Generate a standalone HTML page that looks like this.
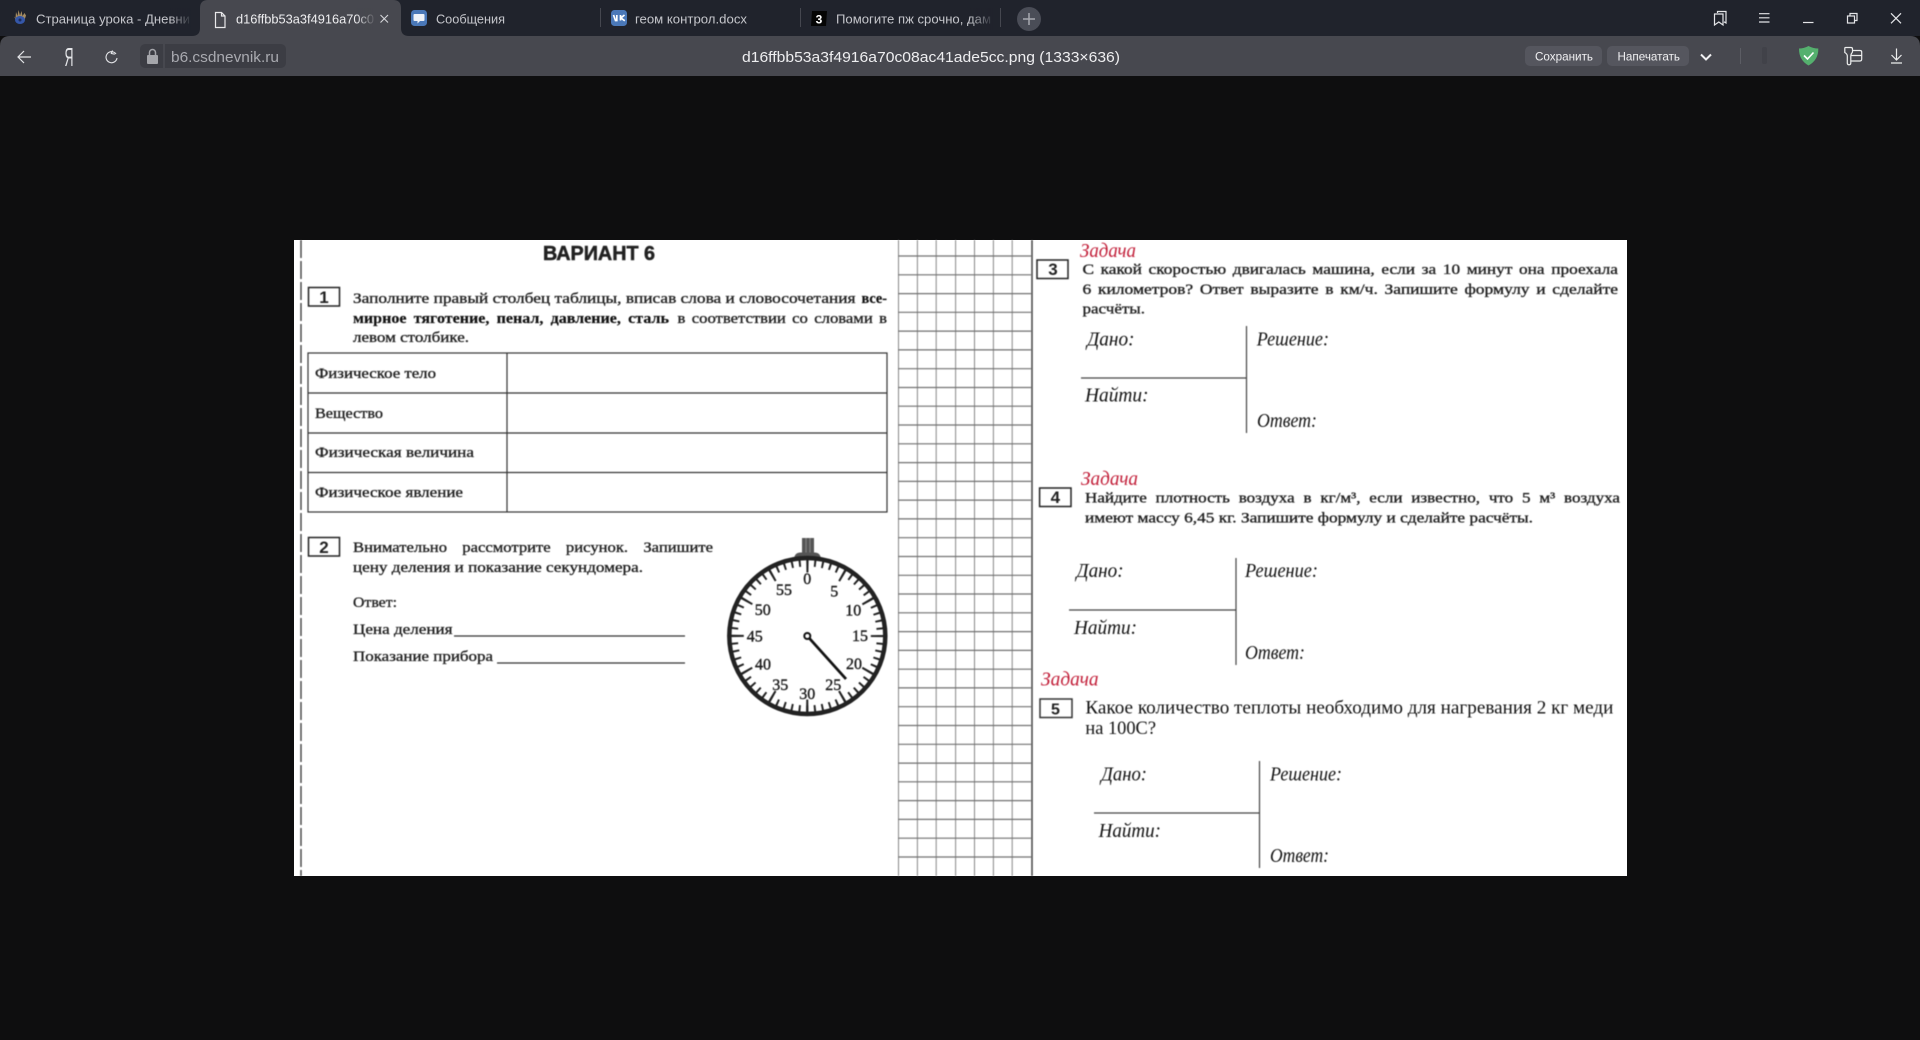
<!DOCTYPE html>
<html lang="ru"><head><meta charset="utf-8"><title>d16ffbb53a3f4916a70c08ac41ade5cc.png (1333×636)</title>
<style>
html,body{margin:0;padding:0;background:#0e0e0f;width:1920px;height:1040px;overflow:hidden}
svg{display:block}
.ui{font-family:"Liberation Sans",sans-serif;filter:blur(.25px)}
.doc{filter:blur(.4px)}
.b{font-family:"Liberation Serif",serif;font-size:15px;fill:#222;stroke:#222;stroke-width:.35}
.bb{font-family:"Liberation Serif",serif;font-size:15px;font-weight:bold;fill:#111;stroke:#111;stroke-width:.2}
.i{font-family:"Liberation Serif",serif;font-style:italic;font-size:20px;fill:#111}
.z{font-family:"Liberation Serif",serif;font-style:italic;font-size:20px;fill:#c2203a}
.n{font-family:"Liberation Sans",sans-serif;font-weight:bold;font-size:17px;fill:#222;text-anchor:middle}
.w{font-family:"Liberation Serif",serif;font-size:16px;fill:#1c1c1c;stroke:#1c1c1c;stroke-width:.4;text-anchor:middle}
.t{font-size:13px;fill:#c5c6cb}
</style></head><body>
<svg width="1920" height="1040" viewBox="0 0 1920 1040" xmlns="http://www.w3.org/2000/svg">
<defs>
<linearGradient id="f1"><stop offset="0" stop-color="#20232c" stop-opacity="0"/><stop offset="1" stop-color="#20232c"/></linearGradient>
<linearGradient id="f2"><stop offset="0" stop-color="#47484f" stop-opacity="0"/><stop offset="1" stop-color="#47484f"/></linearGradient>
</defs>
<rect width="1920" height="1040" fill="#0e0e0f"/>
<!-- tab strip -->
<rect width="1920" height="36" fill="#20232c"/>
<path d="M0 76V46Q0 36 10 36H1910Q1920 36 1920 46V76Z" fill="#47484f"/>
<path d="M192 36Q200 36 200 28V8Q200 0 208 0H393Q401 0 401 8V28Q401 36 409 36Z" fill="#47484f"/>
<g class="ui">
<!-- tab 1 -->
<path d="M14 16.500L15.500 18L16 12L17.500 16L18.500 10L20 15.500L21.500 11L22.500 16L24.500 13L26 15.500L24.500 20L22 20H16Z" fill="#a58c62"/>
<ellipse cx="20" cy="20" rx="5" ry="4" fill="#3557a8"/>
<circle cx="20" cy="20" r="1.500" fill="#1d2c5c"/>
<text class="t" x="36" y="23.500" textLength="154" lengthAdjust="spacingAndGlyphs">Страница урока - Дневни</text>
<rect x="170" y="8" width="22" height="22" fill="url(#f1)"/>
<!-- tab 2 -->
<path d="M215.500 12.500H221.500L225 16V27.500H215.500Z M221.500 12.500V16H225" fill="none" stroke="#e8e8ea" stroke-width="1.200"/>
<text x="236" y="23.500" font-size="13" fill="#eeeef0" textLength="138" lengthAdjust="spacingAndGlyphs">d16ffbb53a3f4916a70c0</text>
<rect x="356" y="8" width="20" height="22" fill="url(#f2)"/>
<path d="M380.500 15L388 22.500M388 15L380.500 22.500" stroke="#d5d6da" stroke-width="1.100"/>
<!-- tab 3 -->
<rect x="411" y="10" width="16" height="16" rx="3.500" fill="#4a78b8"/>
<path d="M414.500 14H423.500Q424.500 14 424.500 15V20Q424.500 21 423.500 21H420L417.500 23.500V21H414.500Q413.500 21 413.500 20V15Q413.500 14 414.500 14Z" fill="#eef2f8"/>
<text class="t" x="436" y="23.500" textLength="69" lengthAdjust="spacingAndGlyphs">Сообщения</text>
<rect x="600" y="8" width="1" height="19" fill="#45474f"/>
<!-- tab 4 -->
<rect x="611" y="10" width="16" height="16" rx="3.500" fill="#4a78b8"/>
<path d="M613.500 15L615.500 20.500H616.800V15M620.500 15V20.500M624.500 15L620.800 18L624.800 20.800" fill="none" stroke="#fff" stroke-width="1.700"/>
<text class="t" x="635" y="23.500" textLength="112" lengthAdjust="spacingAndGlyphs">геом контрол.docx</text>
<rect x="800" y="8" width="1" height="19" fill="#45474f"/>
<!-- tab 5 -->
<path d="M812 11H827L826 26H811Z" fill="#050505"/>
<text x="819" y="23.500" font-size="12" font-weight="bold" fill="#fff" text-anchor="middle">3</text>
<text class="t" x="836" y="23.500" textLength="155" lengthAdjust="spacingAndGlyphs">Помогите пж срочно, дам</text>
<rect x="970" y="8" width="24" height="22" fill="url(#f1)"/>
<rect x="1000" y="8" width="1" height="19" fill="#45474f"/>
<circle cx="1029" cy="19" r="12" fill="#4a4d57"/>
<path d="M1023 19H1035M1029 13V25" stroke="#a7a9b0" stroke-width="1.500"/>
<!-- window controls -->
<g fill="none" stroke="#e4e5e8" stroke-width="1.200">
<path d="M1717.500 13V11.500H1726V23L1724 21.800"/>
<path d="M1714.500 14H1723V25L1718.800 22L1714.500 25Z"/>
<path d="M1759 13.700H1769.500M1759 17.800H1769.500M1759 22H1769.500"/>
<path d="M1803 22.500H1813.500"/>
<rect x="1847.500" y="16" width="7" height="7"/>
<path d="M1850 16V13.500H1857V20.500H1854.500"/>
<path d="M1891 13.300L1901 23.300M1901 13.300L1891 23.300"/>
</g>
<!-- toolbar -->
<path d="M31 57H18M24 51L18 57L24 63" fill="none" stroke="#e4e5e8" stroke-width="1.200"/>
<text x="69" y="66" font-size="26" fill="#e4e5e8" text-anchor="middle" textLength="9" lengthAdjust="spacingAndGlyphs" font-weight="normal">Я</text>
<path d="M116 54A5.500 5.500 0 1 0 117 58M112.500 50.500L111.300 53.500L114.800 54.200" fill="none" stroke="#e4e5e8" stroke-width="1.100"/>
<path d="M140 50Q140 44 146 44H163V68H146Q140 68 140 62Z" fill="#3c3d44"/>
<path d="M165 44H280Q286 44 286 50V62Q286 68 280 68H165Z" fill="#3c3d44"/>
<rect x="147" y="55" width="11" height="9" rx="1" fill="#a5a6ab"/>
<path d="M149.500 55V52.500A3 3 0 0 1 155.500 52.500V55" fill="none" stroke="#a5a6ab" stroke-width="1.500"/>
<text x="171" y="62" font-size="15" fill="#a9aab0" textLength="108" lengthAdjust="spacingAndGlyphs">b6.csdnevnik.ru</text>
<text x="742" y="62" font-size="15" fill="#eeeef0" textLength="378" lengthAdjust="spacingAndGlyphs">d16ffbb53a3f4916a70c08ac41ade5cc.png (1333×636)</text>
<rect x="1525" y="46" width="77" height="20" rx="5" fill="#55565e"/>
<text x="1535" y="60.500" font-size="12" fill="#f0f0f2" textLength="58" lengthAdjust="spacingAndGlyphs">Сохранить</text>
<rect x="1607" y="46" width="82" height="20" rx="5" fill="#55565e"/>
<text x="1617.500" y="60.500" font-size="12" fill="#f0f0f2" textLength="62.500" lengthAdjust="spacingAndGlyphs">Напечатать</text>
<path d="M1701 54.500L1706 59.500L1711 54.500" fill="none" stroke="#f0f0f2" stroke-width="2"/>
<rect x="1740" y="48" width="1" height="16" fill="#5c5d64"/>
<rect x="1762" y="47" width="5" height="17" rx="2" fill="#414249"/>
<path d="M1808.500 46Q1813 48.500 1818.300 48.500Q1818.500 60 1808.500 65.500Q1798.800 60 1799 48.500Q1804 48.500 1808.500 46Z" fill="#55b06e"/>
<path d="M1804 55.500L1807.500 59L1813.500 52.500" fill="none" stroke="#fff" stroke-width="1.600"/>
<g fill="none" stroke="#eceded" stroke-width="1.200">
<path d="M1845.500 47.500H1851Q1852.500 47.500 1852.500 49V52Q1850.800 54 1850.800 56V63Q1850.800 64.800 1849 64.800Q1847.300 64.800 1847.300 63V56Q1847.300 54 1844.800 52.500V48.500Q1844.800 47.500 1845.500 47.500Z"/>
<path d="M1852.500 50.500H1860Q1861.700 50.500 1861.700 52V59Q1861.700 61 1860 61H1851M1851.500 55.500H1861.700"/>
<path d="M1896.500 48.500V60M1891.500 55L1896.500 60L1901.500 55M1891 63H1902"/>
</g>
</g>
<!-- image -->
<rect x="294" y="240" width="1333" height="636" fill="#fff"/>
<g class="doc">
<path d="M301 240V876" stroke="#333" stroke-width="1.300" stroke-dasharray="18 3"/>
<text x="543" y="260" font-family="Liberation Sans, sans-serif" font-weight="bold" font-size="20" fill="#222" stroke="#222" stroke-width=".5" textLength="112" lengthAdjust="spacingAndGlyphs">ВАРИАНТ 6</text>
<!-- task 1 -->
<rect x="308.500" y="287.500" width="31" height="18.500" fill="none" stroke="#222" stroke-width="1.500"/>
<text class="n" x="324" y="303">1</text>
<text class="b" x="353" y="303" textLength="502.500" lengthAdjust="spacingAndGlyphs">Заполните правый столбец таблицы, вписав слова и словосочетания</text>
<text class="bb" x="861.500" y="303" textLength="25.500" lengthAdjust="spacingAndGlyphs">все-</text>
<text class="bb" x="353" y="323" textLength="316" lengthAdjust="spacingAndGlyphs" word-spacing="3">мирное тяготение, пенал, давление, сталь</text>
<text class="b" x="677.500" y="323" textLength="209.500" lengthAdjust="spacingAndGlyphs" word-spacing="2">в соответствии со словами в</text>
<text class="b" x="353" y="342" textLength="116" lengthAdjust="spacingAndGlyphs">левом столбике.</text>
<g fill="none" stroke="#333" stroke-width="1.200">
<rect x="308" y="353" width="579" height="159"/>
<path d="M507 353V512M308 393H887M308 433H887M308 472.500H887"/>
</g>
<text class="b" x="315" y="378" textLength="121" lengthAdjust="spacingAndGlyphs">Физическое тело</text>
<text class="b" x="315" y="418" textLength="68" lengthAdjust="spacingAndGlyphs">Вещество</text>
<text class="b" x="315" y="457" textLength="159" lengthAdjust="spacingAndGlyphs">Физическая величина</text>
<text class="b" x="315" y="497" textLength="148" lengthAdjust="spacingAndGlyphs">Физическое явление</text>
<!-- task 2 -->
<rect x="308.500" y="537.500" width="31" height="18.500" fill="none" stroke="#222" stroke-width="1.500"/>
<text class="n" x="324" y="553">2</text>
<text class="b" x="353" y="552" textLength="360" lengthAdjust="spacingAndGlyphs" word-spacing="10">Внимательно рассмотрите рисунок. Запишите</text>
<text class="b" x="353" y="572" textLength="290" lengthAdjust="spacingAndGlyphs">цену деления и показание секундомера.</text>
<text class="b" x="353" y="607" textLength="44" lengthAdjust="spacingAndGlyphs">Ответ:</text>
<text class="b" x="353" y="634" textLength="99.500" lengthAdjust="spacingAndGlyphs">Цена деления</text>
<path d="M454 636H685M497 663H685" stroke="#333" stroke-width="1.200"/>
<text class="b" x="353" y="661" textLength="140" lengthAdjust="spacingAndGlyphs">Показание прибора</text>
<!-- stopwatch -->
<rect x="802" y="538" width="12" height="16" fill="#555"/>
<path d="M806 538V554M810 538V554" stroke="#888" stroke-width="1"/>
<path d="M794 560Q794 553 800 552.500H815Q821 553 821 560Z" fill="#555"/>
<circle cx="807.300" cy="636" r="78" fill="#fff" stroke="#222" stroke-width="4.500"/>
<circle cx="807.300" cy="636" r="73" fill="none" stroke="#222" stroke-width="7" stroke-dasharray="2 5.645" stroke-dashoffset="1"/>
<circle cx="807.300" cy="636" r="70" fill="none" stroke="#222" stroke-width="13" stroke-dasharray="2.200 34.452" stroke-dashoffset="1.100"/>
<text class="w" x="807.300" y="584">0</text><text class="w" x="834.300" y="596.500">5</text><text class="w" x="853.300" y="615.500">10</text><text class="w" x="860" y="641">15</text><text class="w" x="854" y="669">20</text><text class="w" x="833.300" y="690">25</text><text class="w" x="807.300" y="699">30</text><text class="w" x="780.300" y="690">35</text><text class="w" x="763" y="669.500">40</text><text class="w" x="754.700" y="641.500">45</text><text class="w" x="762.700" y="615">50</text><text class="w" x="784" y="595">55</text>
<path d="M807.300 636L846 679" stroke="#111" stroke-width="2.800"/>
<circle cx="807.300" cy="636" r="3" fill="#fff" stroke="#111" stroke-width="2"/>
<!-- grid -->
<path d="M898.500 240V876M917.400 240V876M936.200 240V876M955.600 240V876M974.500 240V876M993.400 240V876M1012.200 240V876" stroke="#888" stroke-width="1" fill="none"/>
<path d="M898 256H1031M898 274.800H1031M898 293.600H1031M898 312.300H1031M898 331.100H1031M898 349.900H1031M898 368.700H1031M898 387.500H1031M898 406.200H1031M898 425H1031M898 443.800H1031M898 462.600H1031M898 481.400H1031M898 500.100H1031M898 518.900H1031M898 537.700H1031M898 556.500H1031M898 575.300H1031M898 594H1031M898 612.800H1031M898 631.600H1031M898 650.400H1031M898 669.200H1031M898 687.900H1031M898 706.700H1031M898 725.500H1031M898 744.300H1031M898 763.100H1031M898 781.800H1031M898 800.600H1031M898 819.400H1031M898 838.200H1031M898 857H1031" stroke="#707070" stroke-width="1.200" fill="none"/>
<path d="M1032 240V876" stroke="#444" stroke-width="1.500"/>
<!-- task 3 -->
<text class="z" x="1080" y="257" textLength="56" lengthAdjust="spacingAndGlyphs">Задача</text>
<rect x="1037" y="260" width="31" height="18.500" fill="none" stroke="#222" stroke-width="1.500"/>
<text class="n" x="1053" y="275">3</text>
<text class="b" x="1082.500" y="274" textLength="535.500" lengthAdjust="spacingAndGlyphs" word-spacing="2">С какой скоростью двигалась машина, если за 10 минут она проехала</text>
<text class="b" x="1082.500" y="294" textLength="535.500" lengthAdjust="spacingAndGlyphs" word-spacing="2">6 километров? Ответ выразите в км/ч. Запишите формулу и сделайте</text>
<text class="b" x="1082.500" y="313.700" textLength="62.500" lengthAdjust="spacingAndGlyphs">расчёты.</text>
<path d="M1246.500 326V433M1081 378H1246.500" stroke="#444" stroke-width="1.200"/>
<text class="i" x="1087" y="345.700" textLength="47.500" lengthAdjust="spacingAndGlyphs">Дано:</text>
<text class="i" x="1256.700" y="345.700" textLength="72.300" lengthAdjust="spacingAndGlyphs">Решение:</text>
<text class="i" x="1085" y="401.700" textLength="63.600" lengthAdjust="spacingAndGlyphs">Найти:</text>
<text class="i" x="1257" y="427" textLength="60" lengthAdjust="spacingAndGlyphs">Ответ:</text>
<!-- task 4 -->
<text class="z" x="1081" y="485" textLength="57" lengthAdjust="spacingAndGlyphs">Задача</text>
<rect x="1039.600" y="488" width="31.400" height="18.500" fill="none" stroke="#222" stroke-width="1.500"/>
<text class="n" x="1055.300" y="503">4</text>
<text class="b" x="1085" y="502.700" textLength="535" lengthAdjust="spacingAndGlyphs" word-spacing="4">Найдите плотность воздуха в кг/м³, если известно, что 5 м³ воздуха</text>
<text class="b" x="1085" y="522.700" textLength="448" lengthAdjust="spacingAndGlyphs">имеют массу 6,45 кг. Запишите формулу и сделайте расчёты.</text>
<path d="M1236 558V665M1069 610H1236" stroke="#444" stroke-width="1.200"/>
<text class="i" x="1076.400" y="577" textLength="47.200" lengthAdjust="spacingAndGlyphs">Дано:</text>
<text class="i" x="1245" y="577" textLength="73" lengthAdjust="spacingAndGlyphs">Решение:</text>
<text class="i" x="1074" y="634" textLength="63" lengthAdjust="spacingAndGlyphs">Найти:</text>
<text class="i" x="1245" y="659" textLength="60" lengthAdjust="spacingAndGlyphs">Ответ:</text>
<!-- task 5 -->
<text class="z" x="1041" y="685.700" textLength="57.600" lengthAdjust="spacingAndGlyphs">Задача</text>
<rect x="1040" y="699" width="32" height="18.500" fill="none" stroke="#333" stroke-width="1.500"/>
<text class="n" x="1055.500" y="714.500" style="font-size:16px">5</text>
<text x="1085.400" y="713.300" font-family="Liberation Serif, serif" font-size="19" fill="#111" textLength="528" lengthAdjust="spacingAndGlyphs">Какое количество теплоты необходимо для нагревания 2 кг меди</text>
<text x="1085.400" y="734" font-family="Liberation Serif, serif" font-size="19" fill="#111" textLength="70.600" lengthAdjust="spacingAndGlyphs">на 100С?</text>
<path d="M1259.500 761V868M1094 813H1259.500" stroke="#444" stroke-width="1.200"/>
<text class="i" x="1101" y="780.700" textLength="46" lengthAdjust="spacingAndGlyphs">Дано:</text>
<text class="i" x="1270" y="780.700" textLength="72" lengthAdjust="spacingAndGlyphs">Решение:</text>
<text class="i" x="1098.600" y="837" textLength="62.400" lengthAdjust="spacingAndGlyphs">Найти:</text>
<text class="i" x="1270" y="862" textLength="59" lengthAdjust="spacingAndGlyphs">Ответ:</text>
</g>
</svg>
</body></html>
